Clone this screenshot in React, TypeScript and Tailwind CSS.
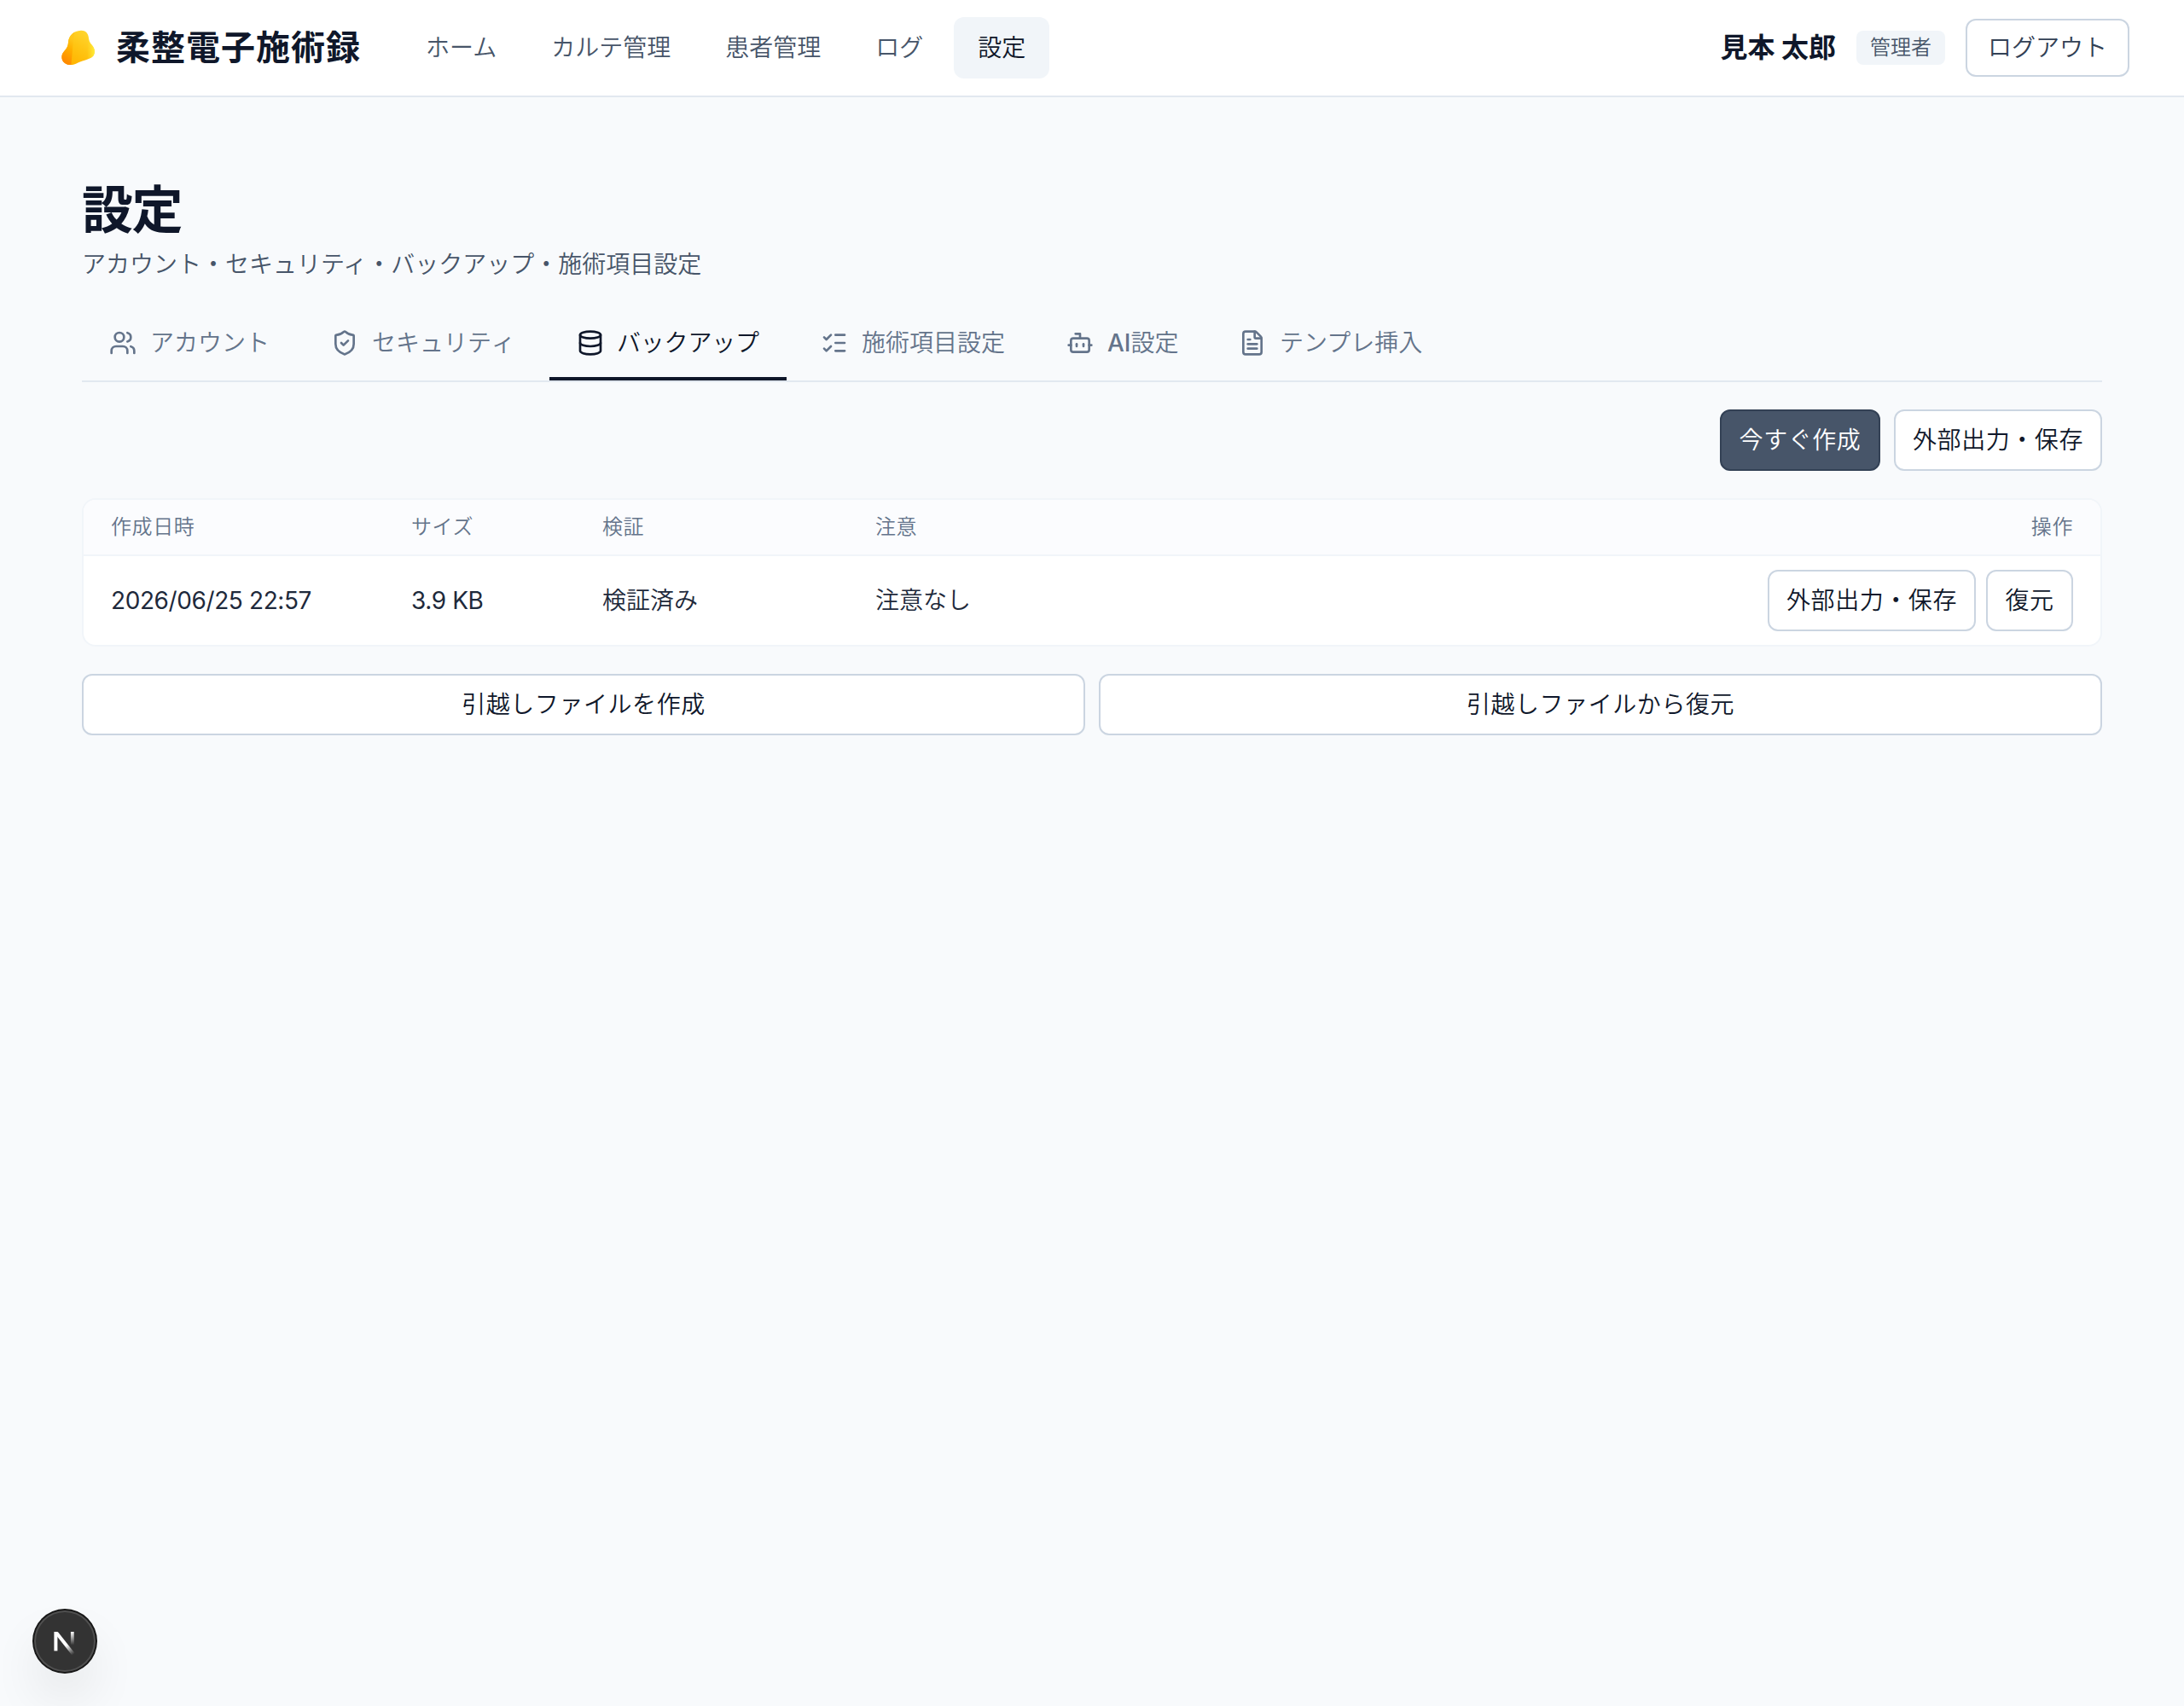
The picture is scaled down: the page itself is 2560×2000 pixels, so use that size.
import { useState } from "react";
import { Users, ShieldCheck, Database, ListChecks, Bot, FileText } from "lucide-react";

const navItems = ["ホーム", "カルテ管理", "患者管理", "ログ", "設定"];

const tabs = [
  { id: "account", label: "アカウント", icon: Users, width: "w-[252px]" },
  { id: "security", label: "セキュリティ", icon: ShieldCheck, width: "w-[280px]" },
  { id: "backup", label: "バックアップ", icon: Database, width: "w-[278px]" },
  { id: "items", label: "施術項目設定", icon: ListChecks, width: "w-[280px]" },
  { id: "ai", label: "AI設定", icon: Bot, width: "w-[194px]" },
  { id: "template", label: "テンプレ挿入", icon: FileText, width: "w-[280px]" },
];

const backups = [{ id: "b1", createdAt: "2026/06/25 22:57", size: "3.9 KB", verified: "検証済み", note: "注意なし" }];

const columns = "grid grid-cols-[352px_224px_320px_1fr] items-center";

function Button({ children, primary, className = "" }: { children: React.ReactNode; primary?: boolean; className?: string }) {
  return (
    <button className={`flex h-[72px] items-center justify-center rounded-xl border-2 text-[28px] tracking-[0.02em] whitespace-nowrap ${primary ? "border-[#334155] bg-[#475569] text-white" : "border-[#cbd5e1] bg-white text-[#0f172a]"} ${className}`}>
      {children}
    </button>
  );
}

function Logo() {
  return (
    <svg width="56" height="56" viewBox="0 0 56 56">
      <defs>
        <linearGradient id="logo-body" x1="16" y1="46" x2="38" y2="10" gradientUnits="userSpaceOnUse">
          <stop offset="0" stopColor="#ffb300" />
          <stop offset="0.5" stopColor="#ffc412" />
          <stop offset="1" stopColor="#ffd52e" />
        </linearGradient>
        <linearGradient id="logo-left" x1="9" y1="42" x2="24" y2="20" gradientUnits="userSpaceOnUse">
          <stop offset="0" stopColor="#ff8a00" />
          <stop offset="0.6" stopColor="#ffb000" />
          <stop offset="1" stopColor="#ffc61a" />
        </linearGradient>
        <linearGradient id="logo-right" x1="38" y1="0" x2="47" y2="0" gradientUnits="userSpaceOnUse">
          <stop offset="0" stopColor="#ffe02e" stopOpacity="0" />
          <stop offset="1" stopColor="#fff03a" />
        </linearGradient>
        <clipPath id="logo-clip">
          <path d="M31 7.8C36 7.6 39 10.5 39.8 15.5C40.4 20 41 21.5 43.5 24.5C46.5 28 47.3 31 46.6 34.5C45.8 39 41.5 40.6 36 42.6C31 44.2 28.5 45 25 46.8C20.5 48.8 14.5 48.6 11 45.2C7.6 41.8 7.6 36.5 10.5 33C14 29 15.6 27 16 21.5C16.6 14 22 8.3 31 7.8Z" />
        </clipPath>
      </defs>
      <g clipPath="url(#logo-clip)">
        <rect width="56" height="56" fill="url(#logo-body)" />
        <path d="M0 0H26C21 14 22 28 18.5 56H0Z" fill="url(#logo-left)" />
        <path d="M38 10H56V48H38Z" fill="url(#logo-right)" />
      </g>
    </svg>
  );
}

function DevBadge() {
  return (
    <div className="fixed bottom-10 left-10 flex size-[72px] items-center justify-center rounded-full bg-[#333333] shadow-[0_0_0_2px_#171717,inset_0_0_0_2px_rgba(255,255,255,0.14),0_32px_64px_-16px_rgba(0,0,0,0.24)]">
      <svg width="80" height="80" viewBox="0 0 40 40" fill="none" className="shrink-0">
        <defs>
          <linearGradient id="n-diag" x1="21" y1="22.2" x2="25.2" y2="27.6" gradientUnits="userSpaceOnUse">
            <stop stopColor="#fff" />
            <stop offset="1" stopColor="#fff" stopOpacity="0" />
          </linearGradient>
          <linearGradient id="n-stem" x1="24" y1="14.5" x2="24" y2="22.3" gradientUnits="userSpaceOnUse">
            <stop stopColor="#fff" />
            <stop offset="1" stopColor="#fff" stopOpacity="0" />
          </linearGradient>
        </defs>
        <path d="M14.7 25.7V14.5" stroke="#fff" strokeWidth="2" />
        <path d="M15.1 15.1L25.1 27.8" stroke="url(#n-diag)" strokeWidth="2" />
        <path d="M24.4 14.5v8" stroke="url(#n-stem)" strokeWidth="1.9" />
      </svg>
    </div>
  );
}

export default function App() {
  const [activeNav, setActiveNav] = useState("設定");
  const [activeTab, setActiveTab] = useState("backup");

  return (
    <div className="min-h-[2000px] bg-[#f8fafc] font-['Inter','Noto_Sans_CJK_JP',sans-serif] font-[350] text-[#0f172a]">
      <header className="flex h-[114px] items-center border-b-2 border-[#e2e8f0] bg-white px-16">
        <div className="flex items-center gap-4">
          <Logo />
          <span className="text-[40px] font-bold tracking-wide">柔整電子施術録</span>
        </div>
        <nav className="ml-12 flex gap-2">
          {navItems.map((item) => (
            <button
              key={item}
              onClick={() => setActiveNav(item)}
              className={`h-[72px] rounded-xl px-7 text-[28px] ${item === activeNav ? "bg-[#f1f5f9] text-[#0f172a]" : "text-[#475569]"}`}
            >
              {item}
            </button>
          ))}
        </nav>
        <div className="ml-auto flex items-center gap-6">
          <span className="text-[32px] font-bold">見本 太郎</span>
          <span className="flex h-10 items-center rounded-lg bg-[#f1f5f9] px-4 text-[24px] text-[#475569]">管理者</span>
          <button className="h-[68px] rounded-xl border-2 border-[#cbd5e1] bg-white px-6 text-[28px] text-[#334155]">ログアウト</button>
        </div>
      </header>

      <main className="px-24 pt-24">
        <h1 className="text-[60px] leading-[72px] font-bold tracking-tight">設定</h1>
        <p className="mt-2 text-[28px] leading-[40px] text-[#475569]">アカウント・セキュリティ・バックアップ・施術項目設定</p>

        <div className="mt-[30px] flex h-[88px] gap-2 border-b-2 border-[#e2e8f0]">
          {tabs.map(({ id, label, icon: Icon, width }) => (
            <button
              key={id}
              onClick={() => setActiveTab(id)}
              className={`flex items-center gap-4 border-b-4 pt-0.5 pl-8 text-[28px] whitespace-nowrap ${width} ${id === "security" ? "[font-kerning:none]" : ""} ${id === activeTab ? "border-[#0f172a] text-[#0f172a]" : "border-transparent text-[#64748b]"}`}
            >
              <Icon size={32} className="shrink-0" />
              <span className={id === "backup" ? "-ml-px tracking-[-0.2px]" : ""}>
                {id === "ai" ? <><span className="font-medium">AI</span>設定</> : label}
              </span>
            </button>
          ))}
        </div>

        <div className="mt-8 flex justify-end gap-4">
          <Button primary className="w-[188px]">今すぐ作成</Button>
          <Button className="w-[244px]">外部出力・保存</Button>
        </div>

        <div className="mt-8 overflow-hidden rounded-2xl border-2 border-[#f1f5f9] bg-white">
          <div className={`${columns} h-[66px] border-b-2 border-[#f1f5f9] bg-[#fbfcfe] text-[24px] tracking-wide text-[#64748b]`}>
            <span className="px-8">作成日時</span>
            <span className="px-8">サイズ</span>
            <span className="px-8">検証</span>
            <div className="flex justify-between px-8">
              <span>注意</span>
              <span>操作</span>
            </div>
          </div>
          {backups.map((b) => (
            <div key={b.id} className={`${columns} h-[104px] text-[28px] text-[#1e293b]`}>
              <span className="px-8 font-normal tracking-[-0.4px]">{b.createdAt}</span>
              <span className="px-8 font-normal tracking-[-0.4px]">{b.size}</span>
              <span className="px-8">{b.verified}</span>
              <div className="flex items-center justify-between px-8">
                <span>{b.note}</span>
                <div className="flex gap-3">
                  <Button className="w-[244px]">外部出力・保存</Button>
                  <Button className="w-[102px]">復元</Button>
                </div>
              </div>
            </div>
          ))}
        </div>

        <div className="mt-8 grid grid-cols-2 gap-4">
          <Button>引越しファイルを作成</Button>
          <Button>引越しファイルから復元</Button>
        </div>
      </main>

      <DevBadge />
    </div>
  );
}
